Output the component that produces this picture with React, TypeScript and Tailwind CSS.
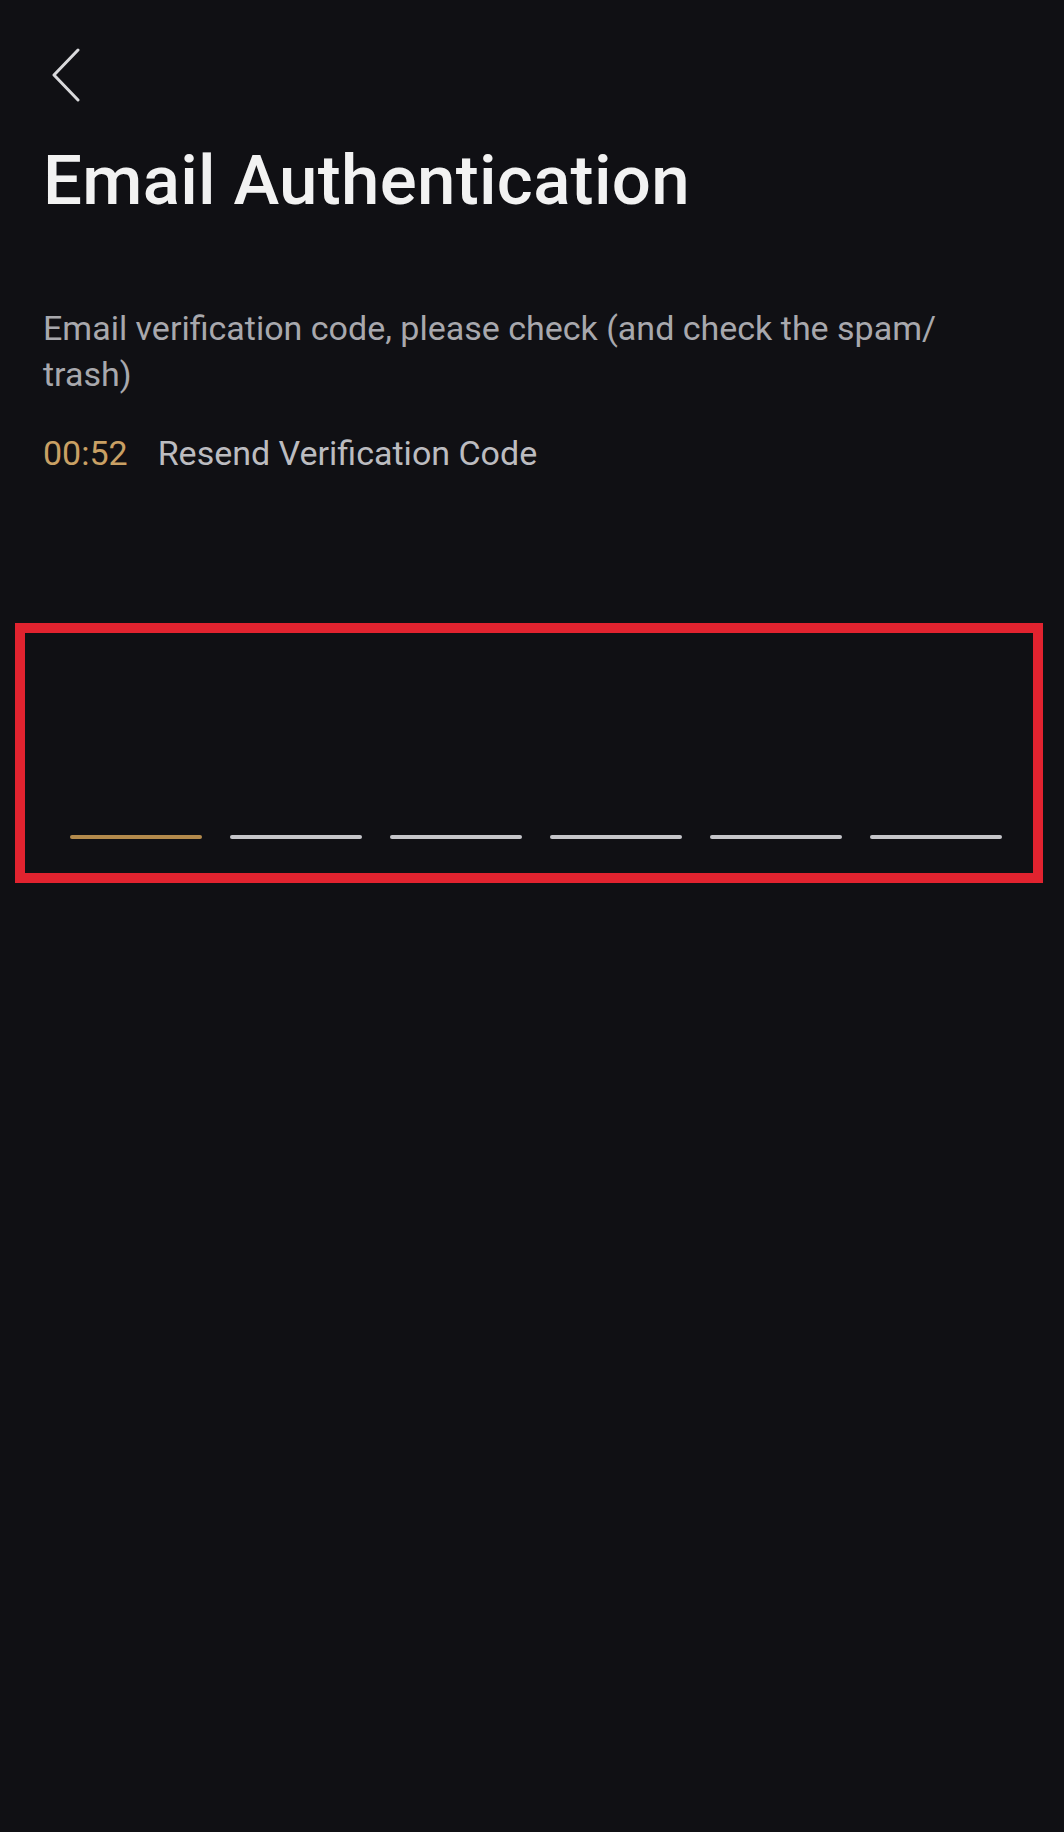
import React from "react";

export default function App() {
  const lines = [0, 1, 2, 3, 4, 5];
  return (
    <div className="min-h-[1832px] w-full bg-[#101014] font-['Roboto',_'Noto_Sans',_sans-serif]">
      <div className="pl-[52px] pt-[48px]">
        <svg width="28" height="54" viewBox="0 0 28 54" fill="none" aria-label="Back">
          <polyline points="26,2 2,27 26,52" stroke="#d9d9dc" strokeWidth="3" strokeLinecap="round" strokeLinejoin="round" />
        </svg>
      </div>
      <h1 className="mt-[47px] pl-[43px] text-[69px] leading-[64px] font-medium tracking-[0.3px] text-[#f2f2f2]">
        Email Authentication
      </h1>
      <p className="mt-[92px] pl-[43px] pr-[20px] text-[34px] leading-[46px] text-[#a8a8ad]">
        Email verification code, please check (and check the spam/
        <br />
        trash)
      </p>
      <div className="mt-[33px] flex items-center gap-[30px] pl-[43px] text-[34px] leading-[46px]">
        <span className="text-[#c9a064]">00:52</span>
        <span className="text-[#bcbcc0]">Resend Verification Code</span>
      </div>
      <div className="ml-[15px] mt-[147px] w-[1028px] border-[10px] border-[#e1232f] pl-[45px] pr-[31px] pt-[202px] pb-[34px]">
        <div className="flex gap-[28px]">
          {lines.map((i) => (
            <div
              key={i}
              className={
                i === 0
                  ? "h-[4px] w-[132px] rounded-full bg-[#b38a4c]"
                  : "h-[4px] w-[132px] rounded-full bg-[#c6c6ca]"
              }
            />
          ))}
        </div>
      </div>
    </div>
  );
}
